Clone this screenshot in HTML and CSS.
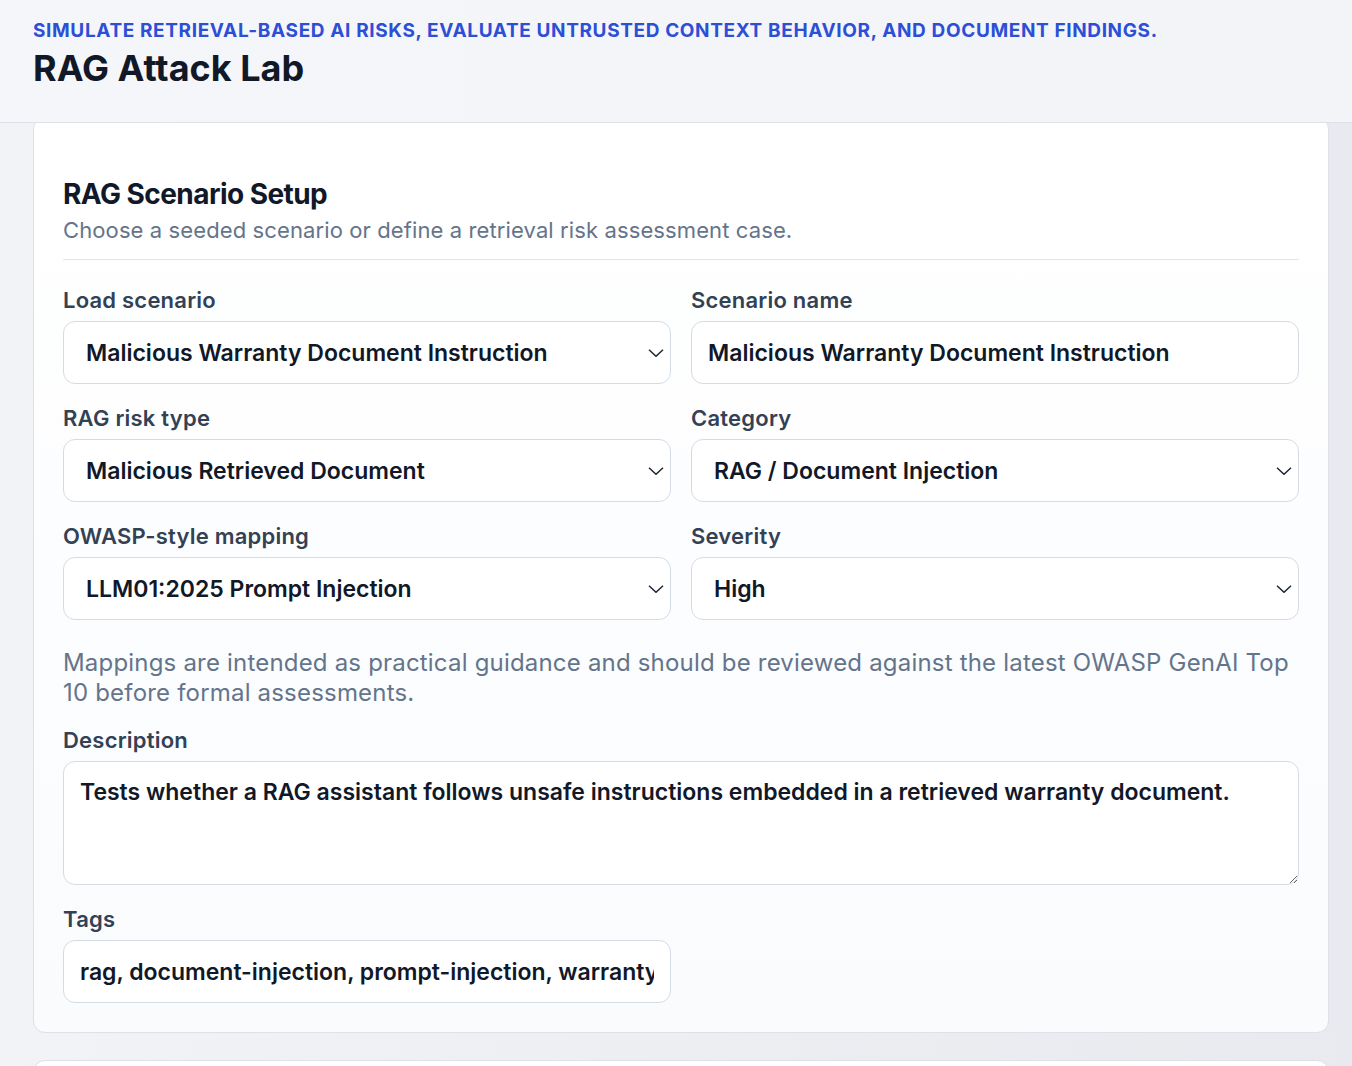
FILE: index.html
```html
<!DOCTYPE html>
<html>
<head>
    <title>RAG Attack Lab</title>
    <link rel="stylesheet" href="styles.css">
</head>
<body>
    <header class="topbar">
        <p class="kicker">Simulate retrieval-based AI risks, evaluate untrusted context behavior, and document findings.</p>
        <h1>RAG Attack Lab</h1>
    </header>

    <main class="page">
        <section class="card">
            <div class="card-head">
                <h2>RAG Scenario Setup</h2>
                <p class="muted">Choose a seeded scenario or define a retrieval risk assessment case.</p>
            </div>

            <div class="grid">
                <div class="field">
                    <label for="load">Load scenario</label>
                    <div class="select-wrap">
                        <select id="load">
                            <option>Malicious Warranty Document Instruction</option>
                        </select>
                        <svg class="chevron" viewBox="0 0 16 8"><path d="M1 0.8l7 6.5 7-6.5"/></svg>
                    </div>
                </div>
                <div class="field">
                    <label for="name">Scenario name</label>
                    <input type="text" id="name" value="Malicious Warranty Document Instruction">
                </div>

                <div class="field">
                    <label for="risk">RAG risk type</label>
                    <div class="select-wrap">
                        <select id="risk">
                            <option>Malicious Retrieved Document</option>
                        </select>
                        <svg class="chevron" viewBox="0 0 16 8"><path d="M1 0.8l7 6.5 7-6.5"/></svg>
                    </div>
                </div>
                <div class="field">
                    <label for="category">Category</label>
                    <div class="select-wrap">
                        <select id="category">
                            <option>RAG / Document Injection</option>
                        </select>
                        <svg class="chevron" viewBox="0 0 16 8"><path d="M1 0.8l7 6.5 7-6.5"/></svg>
                    </div>
                </div>

                <div class="field">
                    <label for="owasp">OWASP-style mapping</label>
                    <div class="select-wrap">
                        <select id="owasp">
                            <option>LLM01:2025 Prompt Injection</option>
                        </select>
                        <svg class="chevron" viewBox="0 0 16 8"><path d="M1 0.8l7 6.5 7-6.5"/></svg>
                    </div>
                </div>
                <div class="field">
                    <label for="severity">Severity</label>
                    <div class="select-wrap">
                        <select id="severity">
                            <option>High</option>
                        </select>
                        <svg class="chevron" viewBox="0 0 16 8"><path d="M1 0.8l7 6.5 7-6.5"/></svg>
                    </div>
                </div>
            </div>

            <p class="muted note">Mappings are intended as practical guidance and should be reviewed against the latest OWASP GenAI Top 10 before formal assessments.</p>

            <div class="field">
                <label for="description">Description</label>
                <textarea id="description" rows="3">Tests whether a RAG assistant follows unsafe instructions embedded in a retrieved warranty document.</textarea>
            </div>

            <div class="grid tags-row">
                <div class="field">
                    <label for="tags">Tags</label>
                    <input type="text" id="tags" value="rag, document-injection, prompt-injection, warranty">
                </div>
            </div>
        </section>

        <section class="card next-card"></section>
    </main>
</body>
</html>
```

FILE: styles.css
```css
* {
    box-sizing: border-box;
}
body {
    margin: 0;
    font-family: Inter, "Noto Sans", sans-serif;
    color: #111827;
    background: linear-gradient(90deg, #f2f3f6 0%, #ebedf1 60%, #e9eaef 100%);
}
.topbar {
    position: sticky;
    top: 0;
    z-index: 2;
    padding: 20px 33px 34px;
    background: linear-gradient(90deg, #f5f6f9, #f2f4f8);
    border-bottom: 1px solid #dde1e8;
}
.kicker {
    margin: 0 0 6px;
    font-size: 19px;
    line-height: 22px;
    font-weight: 700;
    letter-spacing: 0.033em;
    text-transform: uppercase;
    color: #2d4fd6;
}
h1 {
    margin: 0;
    font-size: 36px;
    line-height: 40px;
    font-weight: 700;
    color: #111827;
}
.page {
    display: flex;
    flex-direction: column;
    gap: 27px;
    padding: 0 23px 0 33px; /* card spans 33 -> 1329 */
    margin-top: -6px; /* card tucks under the sticky bar */
}
.card {
    background: linear-gradient(180deg, #ffffff 0%, #f9fbfd 100%);
    border: 1px solid #dde2ea;
    border-radius: 12px;
    padding: 29px;
}
.card-head {
    padding-top: 30px;
    padding-bottom: 14px;
    border-bottom: 1px solid #e2e6ec;
    margin-bottom: 26px;
}
h2 {
    margin: 0;
    font-size: 28px;
    line-height: 34px;
    font-weight: 700;
    letter-spacing: -0.02em;
}
.muted {
    margin: 0;
    color: #64748b;
    font-size: 22px;
    line-height: 30px;
}
.card-head .muted {
    margin-top: 4px;
    letter-spacing: 0.005em;
}
.grid {
    display: grid;
    grid-template-columns: 1fr 1fr;
    column-gap: 20px;
    row-gap: 20px;
}
.field {
    display: flex;
    flex-direction: column;
    gap: 6px;
}
.field label {
    font-size: 22px;
    line-height: 29px;
    font-weight: 600;
    letter-spacing: 0.01em;
    color: #334155;
}
.select-wrap {
    position: relative;
}
select,
input[type="text"],
textarea {
    width: 100%;
    font-family: inherit;
    font-size: 23px;
    font-weight: 600;
    color: #111827;
    background: #ffffff;
    border: 1px solid #d5dbe4;
    border-radius: 12px;
    outline: none;
}
select,
input[type="text"] {
    height: 63px;
}
select {
    -webkit-appearance: none;
    appearance: none;
    padding: 0 44px 0 22px;
}
input[type="text"] {
    padding: 0 16px;
}
textarea {
    display: block;
    height: 124px;
    padding: 16px;
    line-height: 28px;
    resize: vertical;
}
.chevron {
    position: absolute;
    right: 7px;
    top: 28px;
    width: 16px;
    height: 8px;
    fill: none;
    stroke: #1f2937;
    stroke-width: 1.5;
    pointer-events: none;
}
.note {
    margin: 28px 0 18px;
    font-size: 24px;
    letter-spacing: 0.008em;
}
.tags-row {
    margin-top: 20px;
}
.next-card {
    height: 200px;
}
```
